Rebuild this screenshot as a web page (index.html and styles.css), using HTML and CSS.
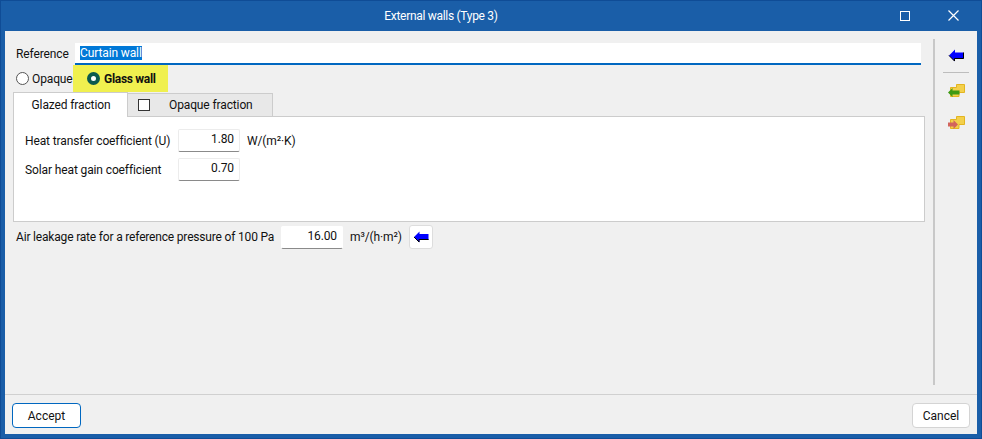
FILE: index.html
```html
<!DOCTYPE html>
<html lang="en">
<head>
    <meta charset="UTF-8">
    <meta name="viewport" content="width=device-width, initial-scale=1.0">
    <title>External walls (Type 3)</title>
    <link rel="stylesheet" href="styles.css">
</head>
<body>
    <div class="window">
        <div class="title-bar">
            <div class="title">External walls (Type 3)</div>
            <div class="win-btn">
                <svg width="10" height="10" viewBox="0 0 10 10"><rect x="0.5" y="0.5" width="9" height="9" fill="none" stroke="#fff"/></svg>
            </div>
            <div class="win-btn">
                <svg width="11" height="11" viewBox="0 0 11 11"><path d="M0.5 0.5L10.5 10.5M10.5 0.5L0.5 10.5" stroke="#fff" stroke-width="1.2"/></svg>
            </div>
        </div>

        <div class="content">
            <div class="main">
                <div class="ref-row">
                    <label class="ref-label">Reference</label>
                    <div class="ref-input"><span class="selected">Curtain wall</span></div>
                </div>

                <div class="radio-row">
                    <span class="radio"></span>
                    <span class="radio-text">Opaque</span>
                    <div class="highlight">
                        <span class="radio checked"></span>
                        <span class="radio-text bold">Glass wall</span>
                    </div>
                </div>

                <div class="tabs">
                    <div class="tab active">Glazed fraction</div>
                    <div class="tab">
                        <span class="checkbox"></span>
                        <span>Opaque fraction</span>
                    </div>
                </div>
                <div class="panel">
                    <div class="form-row">
                        <span class="form-label">Heat transfer coefficient (U)</span>
                        <div class="num-input">1.80</div>
                        <span class="unit">W/(m²·K)</span>
                    </div>
                    <div class="form-row">
                        <span class="form-label">Solar heat gain coefficient</span>
                        <div class="num-input">0.70</div>
                    </div>
                </div>

                <div class="air-row">
                    <span class="air-label">Air leakage rate for a reference pressure of 100 Pa</span>
                    <div class="num-input">16.00</div>
                    <span class="unit">m³/(h·m²)</span>
                    <div class="icon-btn">
                        <svg width="16" height="12" viewBox="0 0 16 12">
                            <path d="M1 6L6.5 0.5V3H15.5V9H6.5V11.5Z" fill="#0000ff"/>
                            <path d="M1 6L6 11V8.5H15.5" fill="none" stroke="#000"/>
                        </svg>
                    </div>
                </div>
            </div>

            <div class="toolbar">
                <svg class="tool arrow" width="16" height="13" viewBox="0 0 16 13">
                    <path d="M1 6.5L7 0.5V3.5H15.5V10H7V12.5Z" fill="#0000ff"/>
                    <path d="M1 6.5L6.5 12V9.5H15.5V3.5" fill="none" stroke="#000"/>
                </svg>
                <div class="tool-sep"></div>
                <svg class="tool" width="17" height="15" viewBox="0 0 17 15">
                    <path d="M2.5 4.5H8.5V1.5H16.5V9.5H11V13.5H2.5Z" fill="#f3d04c" stroke="#e3b520"/>
                    <path d="M0 9.5L4.5 5V7.5H11.5V11.5H4.5V14Z" fill="#3f9a12"/>
                </svg>
                <svg class="tool" width="17" height="15" viewBox="0 0 17 15">
                    <path d="M2.5 4.5H8.5V1.5H16.5V9.5H11V13.5H2.5Z" fill="#f3d04c" stroke="#e3b520"/>
                    <path d="M10 9.5L5.5 5V7.5H0V11.5H5.5V14Z" fill="#d2645c"/>
                </svg>
            </div>
        </div>

        <div class="footer">
            <button class="button primary">Accept</button>
            <button class="button">Cancel</button>
        </div>
    </div>
</body>
</html>
```

FILE: styles.css
```css
html, body {
    margin: 0;
    height: 100%;
}
body {
    font-family: Roboto, "Open Sans", sans-serif;
    font-size: 12px;
    letter-spacing: -0.12px;
    color: #111;
    overflow: hidden;
}
.window {
    box-sizing: border-box;
    width: 982px;
    height: 439px;
    display: flex;
    flex-direction: column;
    background: #f0f0f0;
    border: 5px solid #1a5ea8;
    border-top: 0;
    outline: 1px solid #0f4c96;
    outline-offset: -1px;
}
.title-bar {
    height: 31px;
    flex: none;
    display: flex;
    align-items: center;
    background: #1a5ea8;
    color: #fff;
}
.title {
    flex: 1;
    text-align: center;
    padding-right: 4px;
    letter-spacing: -0.3px;
}
.win-btn {
    width: 48px;
    height: 31px;
    display: flex;
    align-items: center;
    justify-content: center;
}
.content {
    flex: 1;
    display: flex;
    min-height: 0;
}
.main {
    width: 928px;
    box-sizing: border-box;
    padding: 12px 8px 0 8px;
}
.ref-row {
    display: flex;
    align-items: center;
    height: 22px;
    padding-left: 3px;
}
.ref-label {
    width: 59px;
}
.ref-input {
    flex: 1;
    height: 20px;
    margin-right: 4px;
    background: #fff;
    border-bottom: 2px solid #0067c0;
    padding-left: 5px;
    line-height: 20px;
}
.selected {
    background: #0078d7;
    color: #fff;
}
.radio-row {
    display: flex;
    align-items: center;
    height: 27px;
    padding-left: 3px;
}
.radio {
    box-sizing: border-box;
    width: 13px;
    height: 13px;
    border: 1px solid #555;
    border-radius: 50%;
    background: #fff;
    flex: none;
}
.radio.checked {
    border: 4px solid #0b5a4e;
}
.radio-text {
    margin-left: 3px;
    width: 41px;
    white-space: nowrap;
}
.bold {
    font-weight: 700;
    margin-left: 4px;
    width: auto;
    letter-spacing: -0.3px;
}
.highlight {
    display: flex;
    align-items: center;
    align-self: stretch;
    width: 95px;
    box-sizing: border-box;
    padding-left: 14px;
    background: #f0f04f;
}
.tabs {
    display: flex;
    height: 24px;
}
.tab {
    box-sizing: border-box;
    width: 145px;
    display: flex;
    align-items: center;
    gap: 19px;
    padding-left: 10px;
    background: #e8e8e8;
    border: 1px solid #ccc;
    border-bottom: 0;
    border-left: 0;
    margin-top: 1px;
}
.tab.active {
    width: 115px;
    justify-content: center;
    padding-left: 1px;
    background: #fff;
    border-left: 1px solid #ccc;
    margin-top: 0;
    position: relative;
    height: 25px;
    z-index: 1;
}
.checkbox {
    box-sizing: border-box;
    width: 12px;
    height: 12px;
    background: #fff;
    border: 1px solid #333;
}
.panel {
    box-sizing: border-box;
    width: 912px;
    height: 106px;
    background: #fff;
    border: 1px solid #ccc;
    padding: 12px 11px;
    display: flex;
    flex-direction: column;
    gap: 6px;
}
.form-row {
    display: flex;
    align-items: center;
    height: 23px;
}
.form-label {
    width: 153px;
    white-space: nowrap;
}
.num-input {
    box-sizing: border-box;
    width: 62px;
    height: 23px;
    background: #fff;
    border: 1px solid #ececec;
    border-bottom: 1px solid #8a8a8a;
    border-radius: 2px;
    text-align: right;
    padding-right: 5px;
    line-height: 19px;
    flex: none;
}
.unit {
    margin-left: 7px;
    white-space: nowrap;
}
.air-row {
    display: flex;
    align-items: center;
    height: 24px;
    margin-top: 3px;
    padding-left: 3px;
}
.air-label {
    width: 265px;
    white-space: nowrap;
    letter-spacing: -0.18px;
}
.air-row .num-input {
    border-color: #fff;
    border-bottom-color: #8a8a8a;
}
.icon-btn {
    box-sizing: border-box;
    width: 24px;
    height: 24px;
    margin-left: 7px;
    display: flex;
    align-items: center;
    justify-content: center;
    background: #fff;
    border: 1px solid #ddd;
    border-radius: 3px;
}
.toolbar {
    flex: 1;
    margin: 8px 0 9px;
    border-left: 2px solid #c8c8c8;
    display: flex;
    flex-direction: column;
    align-items: center;
    padding-top: 10px;
}
.tool {
    display: block;
}
.tool-sep {
    width: 26px;
    height: 1px;
    background: #bdbdbd;
    margin: 10px 0;
}
.tool + .tool {
    margin-top: 17px;
}
.footer {
    flex: none;
    box-sizing: border-box;
    height: 40px;
    border-top: 1px solid #d0d0d0;
    display: flex;
    justify-content: space-between;
    align-items: flex-start;
    padding: 8px 7px 0;
}
.button {
    font-family: inherit;
    font-size: 12px;
    color: #111;
    width: 58px;
    height: 25px;
    background: #fff;
    border: 1px solid #d4d4d4;
    border-radius: 4px;
    padding: 0;
}
.button.primary {
    width: 69px;
    border: 1px solid #0067c0;
}
```
